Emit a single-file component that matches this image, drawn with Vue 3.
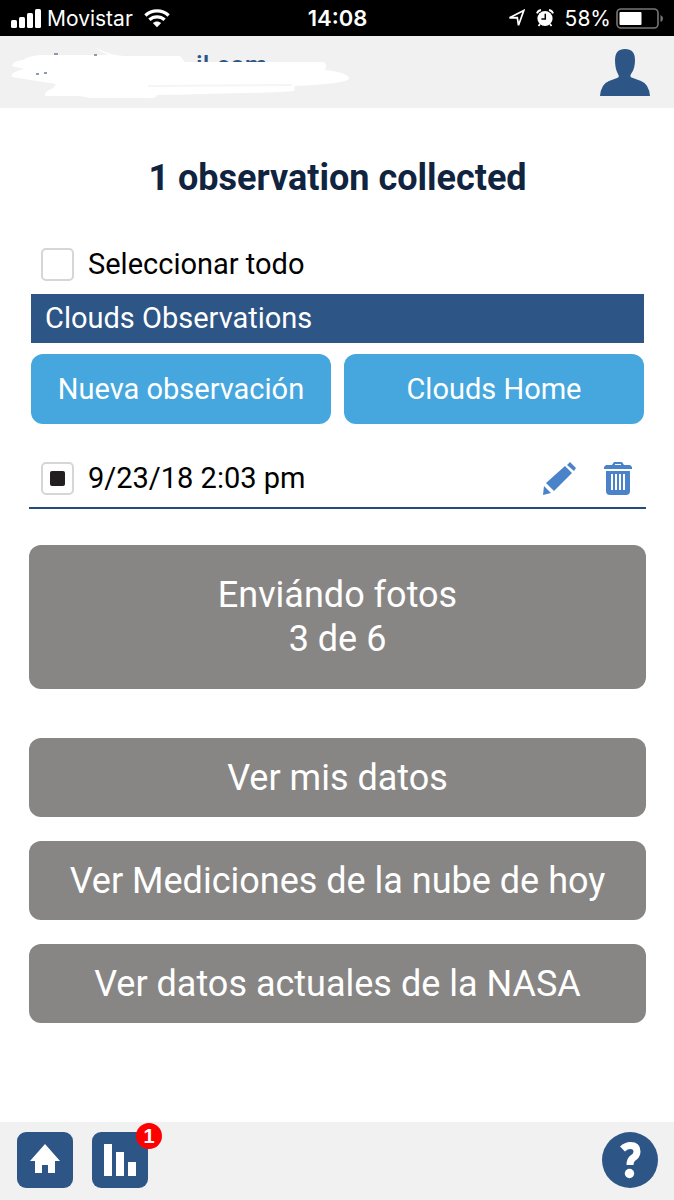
<script setup>
import { ref } from 'vue'

const selectAll = ref(false)
const observationSelected = ref(true)
const links = ['Ver mis datos', 'Ver Mediciones de la nube de hoy', 'Ver datos actuales de la NASA']
</script>

<template>
  <div class="screen">
    <div class="status">
      <div class="status-left">
        <svg class="signal" width="31" height="19" viewBox="0 0 31 19" fill="#fff" aria-hidden="true">
          <rect x="0" y="11" width="6" height="8" rx="1.5" />
          <rect x="8" y="8" width="6" height="11" rx="1.5" />
          <rect x="16" y="4" width="6" height="15" rx="1.5" />
          <rect x="24" y="0" width="6" height="19" rx="1.5" />
        </svg>
        <span>Movistar</span>
        <svg width="26" height="19" viewBox="0 0 26 19" fill="none" stroke="#fff" stroke-width="3.4" aria-hidden="true">
          <path d="M1.4 6.4C8 .4 18 .4 24.6 6.4" />
          <path d="M5.4 10.8C9.8 6.9 16.2 6.9 20.6 10.8" />
          <path d="M8.8 14.1C11.2 11.8 14.8 11.8 17.2 14.1L13 18.3Z" fill="#fff" stroke="none" />
        </svg>
      </div>
      <time class="clock">14:08</time>
      <div class="status-right">
        <svg width="17" height="18" viewBox="0 0 17 18" fill="none" stroke="#fff" stroke-width="1.7" aria-hidden="true">
          <path d="M1.5 8.8L15.8 1.5L10.5 16.3L9.3 8.7Z" />
        </svg>
        <svg width="18" height="18" viewBox="0 0 18 18" aria-hidden="true">
          <circle cx="9" cy="9.5" r="7.6" fill="#fff" />
          <path d="M.9 4.3Q2 1.5 5 1M13 1Q16 1.5 17.1 4.3M4 15l-1.5 2M14 15l1.5 2" fill="none" stroke="#fff" stroke-width="1.8" />
          <path d="M9.3 4.8V10H5.4" fill="none" stroke="#000" stroke-width="1.5" />
        </svg>
        <span>58%</span>
        <svg class="battery" width="48" height="21" viewBox="0 0 48 21" aria-hidden="true">
          <rect x="1" y="1" width="41" height="19" rx="4" fill="none" stroke="#777" stroke-width="1.6" />
          <rect x="3.5" y="4" width="22" height="13" rx="1" fill="#fff" />
          <path d="M44.5 7Q47 8 47 10.5T44.5 14Z" fill="#777" />
        </svg>
      </div>
    </div>

    <header class="account">
      <div class="email">
        <span>il.com</span>
        <svg class="scribble" width="360" height="72" viewBox="0 0 360 72" aria-hidden="true">
          <path d="M96 12Q112 20 125 20H180L185 26H323Q328 28 325 34Q350 37 349 43Q344 48 295 50L294 55Q275 57 157 59Q156 63 146 62H90L80 60H46Q42 57 53 52L56 48L12 41Q10 36 24 33L12 30Q13 25 23 24Q30 19 43 19L109 19Q98 15 96 12Z" fill="#fff" />
          <path d="M148 50L292 49" stroke="#f5f5f6" stroke-width="2" />
          <path d="M54 18h4M94 19h3M36 38h3M44 37h3" stroke="#6b7c96" stroke-width="1.5" />
        </svg>
      </div>
      <button class="icon-button" aria-label="Perfil">
        <svg width="50" height="47" viewBox="0 0 50 47" fill="#2d5687" aria-hidden="true">
          <path d="M0 47Q1 35 9 32L17 29Q20 28 18 25Q15 20 15 11Q15 0 25 0T35 11Q35 20 31 25Q29 28 33 29L41 32Q49 35 50 47Z" />
        </svg>
      </button>
    </header>

    <main class="content">
      <h1>1 observation collected</h1>

      <label class="check-row">
        <input v-model="selectAll" type="checkbox" />
        <span>Seleccionar todo</span>
      </label>

      <section class="observations">
        <h2>Clouds Observations</h2>
        <div class="pair">
          <button>Nueva observación</button>
          <button>Clouds Home</button>
        </div>
      </section>

      <div class="entry">
        <label class="check-row">
          <input v-model="observationSelected" type="checkbox" />
          <span>9/23/18 2:03 pm</span>
        </label>
        <div class="tools">
          <button class="icon-button" aria-label="Editar">
            <svg width="33" height="33" viewBox="0 0 33 33" fill="#4a83c9" aria-hidden="true">
              <path d="M1 24L8 31L0 33ZM3 21L22 4L29 11L11 29ZM24 3L27 0L33 6L31 9Z" />
            </svg>
          </button>
          <button class="icon-button" aria-label="Eliminar">
            <svg width="28" height="33" viewBox="0 0 28 33" aria-hidden="true">
              <path d="M0 7V5L2 3H8L10 0H18L20 3H26L28 5V7ZM11 3H17V2H11Z" fill="#4a83c9" fill-rule="evenodd" />
              <path d="M2 9H26V29Q26 33 22 33H6Q2 33 2 29Z" fill="#4a83c9" />
              <path d="M8 12V28M12 12V28M16 12V28M20 12V28" stroke="#fff" stroke-width="2" />
            </svg>
          </button>
        </div>
      </div>

      <button class="action sending">Enviándo fotos<br />3 de 6</button>

      <nav class="links">
        <button v-for="text in links" :key="text" class="action">{{ text }}</button>
      </nav>
    </main>

    <footer class="bar">
      <div class="bar-left">
        <button class="tile" aria-label="Inicio">
          <svg width="56" height="56" viewBox="0 0 56 56" fill="#fff" aria-hidden="true">
            <path d="M28 12L43 29H38V41H31V33H25V41H18V29H13Z" />
          </svg>
        </button>
        <button class="tile" aria-label="Datos, 1 pendiente">
          <svg width="56" height="56" viewBox="0 0 56 56" fill="#fff" aria-hidden="true">
            <path d="M12 12H20V44H12ZM24 20H32V44H24ZM36 30H44V44H36Z" />
          </svg>
          <span class="badge">1</span>
        </button>
      </div>
      <button class="help" aria-label="Ayuda">
        <svg width="56" height="56" viewBox="0 0 56 56" aria-hidden="true">
          <path d="M20.500 17Q24 13.500 28.500 13.500Q35 13.500 35 19.500Q35 23.500 31 26Q28 28 28 33" fill="none" stroke="#fff" stroke-width="7" />
          <circle cx="27.500" cy="41.500" r="4.700" fill="#fff" />
        </svg>
      </button>
    </footer>
  </div>
</template>

<style>
body {
  background: #fff;
}
</style>

<style scoped>
.screen {
  display: flex;
  flex-direction: column;
  min-height: 100vh;
  font-family: Roboto, "Liberation Sans", sans-serif;
  font-size: 29px;
  color: #000;
}
button {
  border: 0;
  padding: 0;
  font: inherit;
  cursor: pointer;
}
svg {
  display: block;
  flex: none;
}
.status {
  display: grid;
  grid-template-columns: 1fr auto 1fr;
  align-items: center;
  height: 36px;
  padding: 0 10px 0 11px;
  background: #000;
  color: #fff;
  font-family: Inter, "Liberation Sans", sans-serif;
  font-size: 21px;
}
.status-left,
.status-right {
  display: flex;
  align-items: center;
  gap: 11px;
}
.status-right {
  justify-content: flex-end;
}
.signal {
  margin-right: -6px;
}
.battery {
  margin-left: -6px;
}
.clock {
  font-size: 22px;
  font-weight: 600;
}
.account {
  display: flex;
  justify-content: space-between;
  align-items: center;
  height: 72px;
  padding-right: 24px;
  background: #f1f1f2;
}
.email {
  position: relative;
  width: 360px;
  height: 72px;
  box-sizing: border-box;
  padding: 12px 0 0 196px;
  color: #2d5585;
  font-size: 26px;
  font-weight: 500;
  line-height: 34px;
}
.scribble {
  position: absolute;
  top: 0;
  left: 0;
}
.icon-button {
  background: none;
}
.content {
  flex: 1;
  padding: 48px 28px 24px 29px;
}
h1 {
  margin: 0 0 45px;
  color: #10233f;
  font-size: 36px;
  line-height: 44px;
  font-weight: 700;
  text-align: center;
}
.check-row {
  display: flex;
  align-items: center;
  gap: 14px;
  padding-left: 12px;
  line-height: 38px;
}
.check-row input {
  display: grid;
  place-items: center;
  appearance: none;
  box-sizing: border-box;
  width: 33px;
  height: 33px;
  margin: 0;
  border: 2px solid #d6d6d6;
  border-radius: 5px;
  background: #fff;
}
.check-row input:checked::after {
  content: "";
  width: 15px;
  height: 15px;
  border-radius: 2px;
  background: #231f20;
}
.observations {
  margin: 11px 2px 0;
}
h2 {
  margin: 0 0 11px;
  padding: 0 14px;
  background: #2d5585;
  color: #fff;
  font-size: 29px;
  line-height: 49px;
  font-weight: 400;
}
.pair {
  display: grid;
  grid-template-columns: 1fr 1fr;
  gap: 13px;
}
.pair button {
  height: 70px;
  border-radius: 12px;
  background: #46a7de;
  color: #fff;
}
.entry {
  display: flex;
  justify-content: space-between;
  align-items: center;
  margin-top: 24px;
  padding: 11px 0 10px;
  border-bottom: 2px solid #254a7c;
}
.tools {
  display: flex;
  gap: 28px;
  padding-right: 14px;
}
.action {
  display: block;
  width: 100%;
  padding: 18px 8px 17px;
  border-radius: 12px;
  background: #888684;
  color: #fff;
  font-size: 36px;
  line-height: 44px;
}
.sending {
  margin: 36px 0 49px;
  padding: 28px 8px;
}
.links {
  display: grid;
  gap: 24px;
}
.bar {
  display: flex;
  justify-content: space-between;
  align-items: center;
  padding: 10px 16px 12px 17px;
  background: #f1f1f2;
}
.bar-left {
  display: flex;
  gap: 19px;
}
.tile {
  position: relative;
  border-radius: 9px;
  background: #2d5687;
}
.badge {
  position: absolute;
  top: -9px;
  right: -14px;
  width: 26px;
  height: 26px;
  border-radius: 50%;
  background: #f00;
  color: #fff;
  font-family: "Liberation Sans", sans-serif;
  font-size: 20px;
  font-weight: 700;
  line-height: 26px;
  text-align: center;
}
.help {
  border-radius: 50%;
  background: #2d5687;
}
</style>
